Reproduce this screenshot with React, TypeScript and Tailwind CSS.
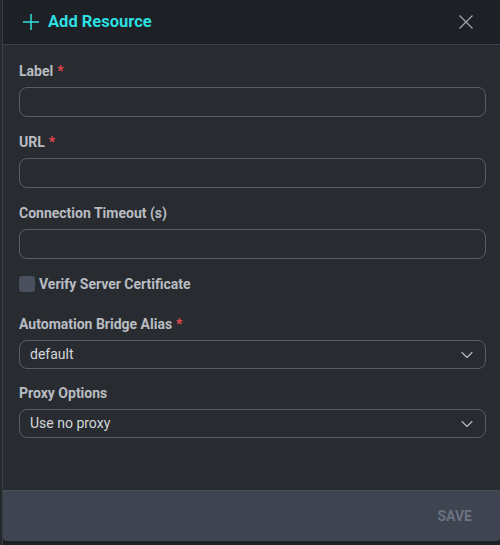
import { ChevronDown } from 'lucide-react';

function FieldLabel({ text, required }: { text: string; required?: boolean }) {
  return (
    <label className="block h-4 text-[14px] font-bold leading-4 text-[#b9bcc1]">
      {text}
      {required && <span className="ml-1 text-[#e5484d]">*</span>}
    </label>
  );
}

function TextInput() {
  return (
    <input
      type="text"
      className="mt-2 block h-[30px] w-full rounded-lg border border-[#575c67] bg-transparent px-3 text-[14px] text-[#d3d6da] outline-none"
    />
  );
}

function SelectBox({ value }: { value: string }) {
  return (
    <div className="mt-2 flex h-[29px] w-full items-center justify-between rounded-lg border border-[#575c67] pl-[10px] pr-2">
      <span className="text-[14px] text-[#d3d6da]">{value}</span>
      <ChevronDown className="h-5 w-5 text-[#b3b7bd]" strokeWidth={1.4} />
    </div>
  );
}

export default function App() {
  return (
    <div className="flex h-[545px] w-[500px] bg-[#1c1f23] font-['Roboto',sans-serif]">
      <div className="w-[3px] border-r border-[#3a3e45] bg-[#25282d]" />
      <div className="flex h-[541px] flex-1 flex-col overflow-hidden rounded-b-[4px] bg-[#282c31]">
        <div className="flex h-[45px] shrink-0 items-center justify-between border-b border-[#3d4148] bg-[#1d2025] pl-5 pr-[27px]">
          <div className="flex items-center gap-[9px]">
            <svg width="16" height="16" viewBox="0 0 16 16" className="text-[#2ddfe0]">
              <path d="M8 0v16M0 8h16" stroke="currentColor" strokeWidth="1.5" fill="none" />
            </svg>
            <span className="text-[16.5px] font-bold leading-none text-[#2ddfe0]">Add Resource</span>
          </div>
          <svg width="14" height="14" viewBox="0 0 14 14" className="text-[#a3a7ad]">
            <path d="M0.5 0.5l13 13M13.5 0.5l-13 13" stroke="currentColor" strokeWidth="1.2" fill="none" />
          </svg>
        </div>

        <div className="flex-1 pl-4 pr-[14px] pt-[18px]">
          <FieldLabel text="Label" required />
          <TextInput />

          <div className="mt-[17px]">
            <FieldLabel text="URL" required />
            <TextInput />
          </div>

          <div className="mt-[17px]">
            <FieldLabel text="Connection Timeout (s)" />
            <TextInput />
          </div>

          <div className="mt-[17px] flex items-center gap-1">
            <span className="h-4 w-4 rounded-[3px] bg-[#4a505c]" />
            <span className="text-[14px] font-bold leading-4 text-[#b9bcc1]">Verify Server Certificate</span>
          </div>

          <div className="mt-6">
            <FieldLabel text="Automation Bridge Alias" required />
            <SelectBox value="default" />
          </div>

          <div className="mt-4">
            <FieldLabel text="Proxy Options" />
            <SelectBox value="Use no proxy" />
          </div>
        </div>

        <div className="flex h-[51px] shrink-0 items-center justify-end border-t border-[#4a505a] bg-[#3e4450] pr-[28px]">
          <span className="text-[14px] font-bold text-[#6b7380]">SAVE</span>
        </div>
      </div>
    </div>
  );
}
